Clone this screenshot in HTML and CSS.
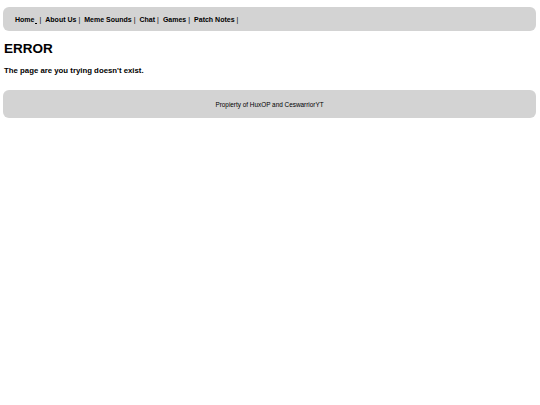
FILE: index.html
```html
<!DOCTYPE html>
<html>
<head>
<meta charset="utf-8">
<link rel="stylesheet" href="styles.css">
</head>
<body>
<nav class="nav">
  <a class="link link-home" href="#">Home</a><span class="gap-u"></span><span class="sep">|</span>
  <a class="link" href="#">About Us</a><span class="sep">|</span>
  <a class="link" href="#">Meme Sounds</a><span class="sep">|</span>
  <a class="link" href="#">Chat</a><span class="sep">|</span>
  <a class="link" href="#">Games</a><span class="sep">|</span>
  <a class="link" href="#">Patch Notes</a><span class="sep">|</span>
</nav>
<h1 class="title">ERROR</h1>
<p class="msg">The page are you trying doesn't exist.</p>
<footer class="footer">Propierty of HuxOP and CeswarriorYT</footer>
</body>
</html>
```
FILE: styles.css
```css
html, body {
  margin: 0;
  padding: 0;
  background: #ffffff;
}
body {
  padding: 7px 4px 0 3px;
  font-family: "Liberation Sans", Arial, sans-serif;
  color: #000;
}
.nav {
  background: #d3d3d3;
  border-radius: 6px;
  height: 24px;
  display: flex;
  align-items: center;
  padding-left: 12px;
  font-size: 7px;
  font-weight: bold;
}
.link {
  color: #000;
  text-decoration: none;
}
.gap-u {
  display: inline-block;
  width: 2px;
  height: 1px;
  background: #000;
  margin-left: 1px;
  align-self: center;
  margin-top: 8px;
}
.sep {
  margin: 0 4px 0 2px;
  font-weight: normal;
}
.title {
  margin: 10px 0 0 1px;
  font-size: 13.5px;
  line-height: 16px;
  font-weight: bold;
}
.msg {
  margin: 9px 0 0 1px;
  font-size: 7.8px;
  line-height: 10px;
  font-weight: bold;
}
.footer {
  margin-top: 14px;
  background: #d3d3d3;
  border-radius: 6px;
  height: 28px;
  display: flex;
  align-items: center;
  justify-content: center;
  font-size: 6.4px;
}
```
